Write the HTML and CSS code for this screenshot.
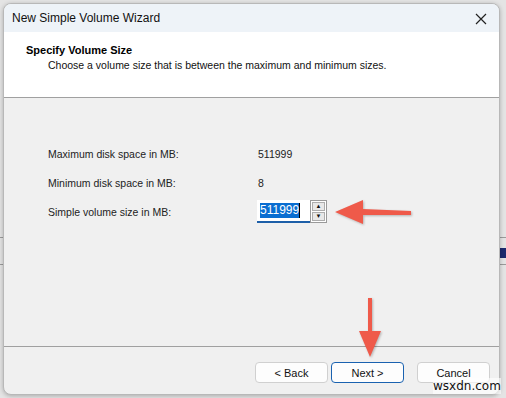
FILE: index.html
```html
<!DOCTYPE html>
<html lang="en">
  <head>
    <meta charset="UTF-8" />
    <title>New Simple Volume Wizard</title>
    <link rel="stylesheet" href="styles.css">
  </head>
  <body>
    <!-- Wizard window -->
    <div class="dialog">
      <div class="titlebar">
        <span class="title">New Simple Volume Wizard</span>
        <svg class="close" width="12" height="12" viewBox="0 0 12 12">
          <path d="M1 1 L11 11 M11 1 L1 11" stroke="#222" stroke-width="1.2" fill="none" />
        </svg>
      </div>

      <!-- Header -->
      <div class="header">
        <div class="header-title">Specify Volume Size</div>
        <div class="header-sub">Choose a volume size that is between the maximum and minimum sizes.</div>
      </div>

      <!-- Body -->
      <div class="content">
        <div class="fields">
          <div class="label">Maximum disk space in MB:</div>
          <div class="value">511999</div>
          <div class="label">Minimum disk space in MB:</div>
          <div class="value">8</div>
          <div class="label">Simple volume size in MB:</div>
          <div class="spin">
            <div class="spin-input"><span class="sel">511999</span><span class="caret"></span></div>
            <div class="spin-btns">
              <div class="spin-btn">&#9650;</div>
              <div class="spin-btn">&#9660;</div>
            </div>
          </div>
        </div>
      </div>

      <!-- Footer -->
      <div class="footer">
        <button class="btn">&lt; Back</button>
        <button class="btn btn-default">Next &gt;</button>
        <button class="btn btn-cancel">Cancel</button>
      </div>
    </div>

    <!-- Annotation arrows -->
    <svg class="arrow arrow-left" width="80" height="34" viewBox="0 0 80 34">
      <path d="M78 15 L30 13 L30 4 L2 16 L30 28 L30 19 L78 19 Z" fill="#ef5a4a" />
    </svg>
    <svg class="arrow arrow-down" width="30" height="64" viewBox="0 0 30 64">
      <path d="M13 1 L17 1 L17 34 L26 34 L15 60 L4 34 L13 34 Z" fill="#ef5a4a" />
    </svg>

    <div class="watermark">wsxdn.com</div>
  </body>
</html>
```

FILE: styles.css
```css
/* Page / backdrop */
body {
  margin: 0;
  width: 506px;
  height: 398px;
  overflow: hidden;
  position: relative;
  font-family: "Liberation Sans", Arial, sans-serif;
  font-size: 10.5px;
  color: #1a1a1a;
  background-color: #e4e4e4;
  background-image:
    linear-gradient(#1c2a6e, #1c2a6e),
    linear-gradient(#9a9a9a, #9a9a9a),
    linear-gradient(#9a9a9a, #9a9a9a);
  background-size: 6px 10px, 506px 1px, 506px 1px;
  background-position: 500px 248px, 0 237px, 0 264px;
  background-repeat: no-repeat;
  padding: 3px 0 0 3px;
  box-sizing: border-box;
}

/* Window */
.dialog {
  width: 497px;
  height: 392px;
  border: 1px solid #b8b8b8;
  border-radius: 8px;
  overflow: hidden;
  box-sizing: border-box;
  display: flex;
  flex-direction: column;
  background-color: #f0f0f0;
  box-shadow: 0 1px 4px rgba(0, 0, 0, 0.25);
}

.titlebar {
  height: 28px;
  background-color: #eef3f8;
  display: flex;
  align-items: center;
  justify-content: space-between;
  padding: 0 12px 0 8px;
  flex-shrink: 0;
}

.title {
  font-family: "Liberation Sans", Arial, sans-serif;
  font-size: 12px;
  color: #111;
}

.close {
  margin-top: 1px;
}

/* Header */
.header {
  height: 66px;
  background-color: #fff;
  border-bottom: 1px solid #a0a0a0;
  padding: 11px 0 0 22px;
  box-sizing: border-box;
  flex-shrink: 0;
}

.header-title {
  font-weight: bold;
  font-size: 11px;
  color: #000;
  line-height: 14px;
}

.header-sub {
  padding-left: 22px;
  margin-top: 1px;
  line-height: 14px;
  color: #111;
}

/* Body */
.content {
  height: 249px;
  border-bottom: 1px solid #a0a0a0;
  box-sizing: border-box;
  padding: 41px 0 0 44px;
  flex-shrink: 0;
}

.fields {
  display: grid;
  grid-template-columns: 209px auto;
  grid-auto-rows: 29px;
  align-items: center;
}

.label,
.value {
  color: #222;
}

.value {
  padding-left: 1px;
}

.spin {
  display: flex;
  align-items: stretch;
  height: 23px;
}

.spin-input {
  width: 53px;
  background-color: #fff;
  border-bottom: 2px solid #1d5fa8;
  box-sizing: border-box;
  display: flex;
  align-items: center;
  padding-left: 3px;
}

.sel {
  background-color: #0a6ed1;
  color: #fff;
  font-size: 12px;
  line-height: 15px;
}

.caret {
  width: 1px;
  height: 15px;
  background-color: #000;
}

.spin-btns {
  width: 17px;
  border: 1px solid #9a9a9a;
  box-sizing: border-box;
  display: flex;
  flex-direction: column;
  gap: 1px;
  padding: 1px;
  background-color: #fff;
}

.spin-btn {
  flex: 1;
  border: 1px solid #adadad;
  background-color: #e8e8e8;
  font-size: 6px;
  line-height: 7px;
  text-align: center;
  color: #111;
}

/* Footer */
.footer {
  flex: 1;
  display: flex;
  align-items: flex-start;
  justify-content: flex-end;
  padding: 15px 9px 0 0;
}

.btn {
  width: 73px;
  height: 21px;
  font-family: "Liberation Sans", Arial, sans-serif;
  font-size: 11px;
  color: #111;
  background-color: #fdfdfd;
  border: 1px solid #d0d0d0;
  border-radius: 4px;
  padding: 0;
  margin-left: 3px;
}

.btn-default {
  border-color: #1a62b0;
}

.btn-cancel {
  margin-left: 13px;
}

/* Annotations */
.arrow {
  position: absolute;
  filter: drop-shadow(1px 1px 1px rgba(0, 0, 0, 0.25));
}

.arrow-left {
  left: 333px;
  top: 196px;
}

.arrow-down {
  left: 355px;
  top: 297px;
}

.watermark {
  position: absolute;
  left: 433px;
  top: 378px;
  font-family: "DejaVu Sans", sans-serif;
  font-size: 12px;
  color: #111;
  background-color: rgba(255, 255, 255, 0.6);
  line-height: 16px;
}
```
